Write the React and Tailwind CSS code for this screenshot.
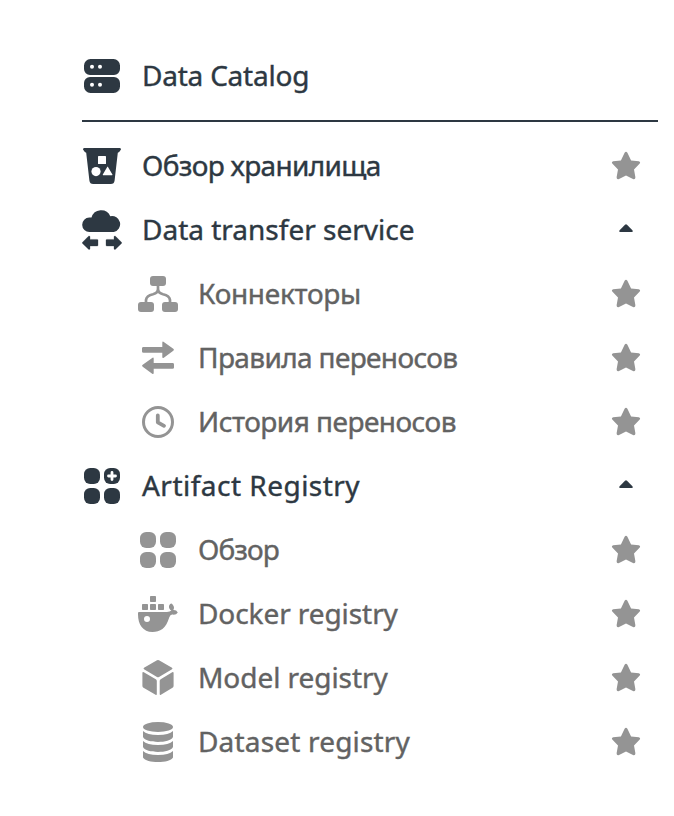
import React from "react";

const icons = {
  catalog: (
    <>
      <path fillRule="evenodd" d="M8.5 3H31.5A6.5 6.5 0 0 1 38 9.5V13A6 6 0 0 1 32 19H8A6 6 0 0 1 2 13V9.5A6.5 6.5 0 0 1 8.5 3ZM10 8.7a2 2 0 1 0 0 4a2 2 0 0 0 0-4ZM18 8.7a2 2 0 1 0 0 4a2 2 0 0 0 0-4Z" />
      <path fillRule="evenodd" d="M8 21H32A6 6 0 0 1 38 27V30.5A6.5 6.5 0 0 1 31.5 37H8.5A6.5 6.5 0 0 1 2 30.5V27A6 6 0 0 1 8 21ZM10 26.7a2 2 0 1 0 0 4a2 2 0 0 0 0-4ZM18 26.7a2 2 0 1 0 0 4a2 2 0 0 0 0-4Z" />
    </>
  ),
  bucket: (
    <>
      <path d="M2.6 2H37.4Q39 2 39 3.4Q37.5 6 35.8 6.7L32.6 34.5Q32.2 38 28.8 38H11.2Q7.8 38 7.4 34.5L4.2 6.7Q2.5 6 1 3.4Q1 2 2.6 2Z" />
      <g fill="#fff">
        <rect x="16" y="10" width="8" height="8" rx=".6" />
        <circle cx="14" cy="25.6" r="4.6" />
        <path d="M25.2 20.9Q25.6 20.2 26 20.9L30.4 28.5Q30.7 29.2 30 29.2H21.2Q20.5 29.2 20.8 28.5Z" />
      </g>
    </>
  ),
  cloud: (
    <>
      <path d="M7.5 22A7.2 7.2 0 0 1 7.3 7.6Q8.5 7.4 9.5 7.6A10 10 0 0 1 28.3 6.2A8 8 0 1 1 31.8 22Z" />
      <path d="M.5 32.2L6.5 26.3Q8 25.5 8 27V29.4H15.2Q16 29.4 16 30.2V35.2Q16 36 15.2 36H8V38.4Q8 40 6.5 39.2L.5 33.4Q0 32.8.5 32.2ZM39.5 32.2L33.5 26.3Q32 25.5 32 27V29.4H24.8Q24 29.4 24 30.2V35.2Q24 36 24.8 36H32V38.4Q32 40 33.5 39.2L39.5 33.4Q40 32.8 39.5 32.2Z" stroke="currentColor" strokeWidth=".3" />
    </>
  ),
  tree: (
    <>
      <rect x="12" y="2" width="16" height="10" rx="3" />
      <rect x="0" y="28" width="16" height="10" rx="3" />
      <rect x="24" y="28" width="16" height="10" rx="3" />
      <path d="M20 11V15Q20 19 15 20.2Q8.5 21.6 8 26V29M20 15Q20 19 25 20.2Q31.5 21.6 32 26V29" fill="none" stroke="currentColor" strokeWidth="2.7" />
    </>
  ),
  swap: (
    <path d="M5.5 9H24.3V4.8Q24.3 3 25.8 3.9L35.3 10.8Q36.7 11.8 35.3 12.8L25.8 19.7Q24.3 20.6 24.3 18.8V14.8H5.5Q4 14.8 4 13.4V10.4Q4 9 5.5 9ZM34.5 25H15.7V20.8Q15.7 19 14.2 19.9L4.7 26.8Q3.3 27.8 4.7 28.8L14.2 35.7Q15.7 36.6 15.7 34.8V30.8H34.5Q36 30.8 36 29.4V26.4Q36 25 34.5 25Z" />
  ),
  clock: (
    <g fill="none" stroke="currentColor" strokeLinecap="round" strokeLinejoin="round">
      <circle cx="20" cy="20" r="14.5" strokeWidth="3" />
      <path d="M19.8 13.5V20.3L26 23.8" strokeWidth="3.8" />
    </g>
  ),
  grid: (
    <>
      <rect x="2" y="2" width="16" height="16" rx="6.2" />
      <rect x="22" y="2" width="16" height="16" rx="6.2" />
      <rect x="2" y="22" width="16" height="16" rx="6.2" />
      <rect x="22" y="22" width="16" height="16" rx="6.2" />
    </>
  ),
  docker: (
    <>
      <path d="M12.8 2H17.2Q18 2 18 2.8V7.2Q18 8 17.2 8H12.8Q12 8 12 7.2V2.8Q12 2 12.8 2ZM4.8 10H9.2Q10 10 10 10.8V15.2Q10 16 9.2 16H4.8Q4 16 4 15.2V10.8Q4 10 4.8 10ZM12.8 10H17.2Q18 10 18 10.8V15.2Q18 16 17.2 16H12.8Q12 16 12 15.2V10.8Q12 10 12.8 10ZM20.8 10H25.2Q26 10 26 10.8V15.2Q26 16 25.2 16H20.8Q20 16 20 15.2V10.8Q20 10 20.8 10Z" />
      <path fillRule="evenodd" d="M1 18H29Q32 18 33.4 16.6C30.6 14.8 30.3 12 32.2 10Q33.4 9 34.6 10.4C36.3 12.3 36.4 14 35.3 16Q38.4 15.8 39.8 18.4Q38 21.2 34.6 20.6Q32.4 20.2 31.2 23.5C28 34.5 22 38 14.5 38C5 38 0 30.5 0 20.5V19Q0 18 1 18ZM9 22a3 3 0 1 0 0 6a3 3 0 0 0 0-6Z" />
    </>
  ),
  cube: (
    <path d="M19 2.3Q20 1.7 21 2.3L34 9.8Q35 10.5 34 11.2L21 18.9Q20 19.5 19 18.9L6 11.2Q5 10.5 6 9.8ZM5.8 14.2L17.8 21.2Q18.8 21.8 18.8 23V36Q18.8 37.3 17.6 36.7L5.5 29.8Q4.4 29.1 4.4 27.8V15Q4.4 13.5 5.8 14.2ZM34.2 14.2L22.7 21.2Q21.7 21.8 21.7 23V36Q21.7 37.3 22.9 36.7L34.5 29.8Q35.6 29.1 35.6 27.8V15Q35.6 13.5 34.2 14.2Z" />
  ),
  database: (
    <>
      <ellipse cx="20" cy="5" rx="15" ry="5" />
      <path d="M5 9Q9 13 20 13T35 9V15C32 21.6 8 21.6 5 15ZM5 19Q9 23 20 23T35 19V25C32 31.6 8 31.6 5 25ZM5 29Q9 33 20 33T35 29V35.4C32 41.5 8 41.5 5 35.4Z" />
    </>
  ),
};

icons.gridPlus = (
  <>
    {icons.grid}
    <path d="M30 6.5V13.5M26.5 10H33.5" stroke="#fff" strokeWidth="2.8" strokeLinecap="round" />
  </>
);

const rows = [
  { icon: "bucket", label: "Обзор хранилища", end: "star", spacing: "tracking-[-0.67px]" },
  { icon: "cloud", label: "Data transfer service", end: "caret" },
  { icon: "tree", label: "Коннекторы", end: "star", sub: true, spacing: "tracking-[-0.3px]" },
  { icon: "swap", label: "Правила переносов", end: "star", sub: true, spacing: "tracking-[-0.63px]" },
  { icon: "clock", label: "История переносов", end: "star", sub: true, spacing: "tracking-[-0.52px]" },
  { icon: "gridPlus", label: "Artifact Registry", end: "caret", spacing: "tracking-[0.48px]" },
  { icon: "grid", label: "Обзор", end: "star", sub: true, spacing: "tracking-[-0.9px]" },
  { icon: "docker", label: "Docker registry", end: "star", sub: true, spacing: "tracking-[-0.08px]" },
  { icon: "cube", label: "Model registry", end: "star", sub: true, spacing: "tracking-[-0.05px]" },
  { icon: "database", label: "Dataset registry", end: "star", sub: true, spacing: "tracking-[0.18px]" },
];

function Star() {
  return (
    <svg viewBox="0 0 32 32" className="size-8 text-[#949494]" fill="currentColor">
      <path d="M14.6 2.8Q16 .9 17.4 2.8L21.1 10.4L28.8 11.3Q31 11.9 29.5 13.8L24 19.4L25.4 27.2Q25.4 29.8 23 29L16 25.6L9 29Q6.6 29.8 6.6 27.2L8 19.4L2.5 13.8Q1 11.9 3.2 11.3L10.9 10.4Z" />
    </svg>
  );
}

function Caret() {
  return (
    <svg viewBox="0 0 32 32" className="size-8" fill="currentColor">
      <path d="M15 10.8Q16 9.8 17 10.8L22.4 16.3Q23.6 18 21.7 18H10.3Q8.4 18 9.6 16.3Z" />
    </svg>
  );
}

function Row({ icon, label, end, sub, spacing = "" }) {
  return (
    <li className={`flex h-16 items-center pr-4 ${sub ? "pl-14 text-[#626262]" : "text-[#2d3842]"}`}>
      <svg viewBox="0 0 40 40" className={`size-10 shrink-0 ${sub ? "text-[#949494]" : ""}`} fill="currentColor">
        {icons[icon]}
      </svg>
      <span className={`mb-0.5 ml-5 flex-1 text-[28px] leading-10 whitespace-nowrap [-webkit-text-stroke:0.4px] ${spacing}`}>{label}</span>
      {end === "star" && <Star />}
      {end === "caret" && <Caret />}
    </li>
  );
}

export default function App() {
  return (
    <nav className="h-[816px] w-[674px] bg-white pt-11 pr-4 pl-[82px] font-['Noto_Sans',sans-serif]">
      <ul>
        <Row icon="catalog" label="Data Catalog" spacing="tracking-[-0.22px]" />
      </ul>
      <hr className="mt-3 mb-3 border-t-2 border-[#2d3842]" />
      <ul>
        {rows.map((row) => (
          <Row key={row.label} {...row} />
        ))}
      </ul>
    </nav>
  );
}
